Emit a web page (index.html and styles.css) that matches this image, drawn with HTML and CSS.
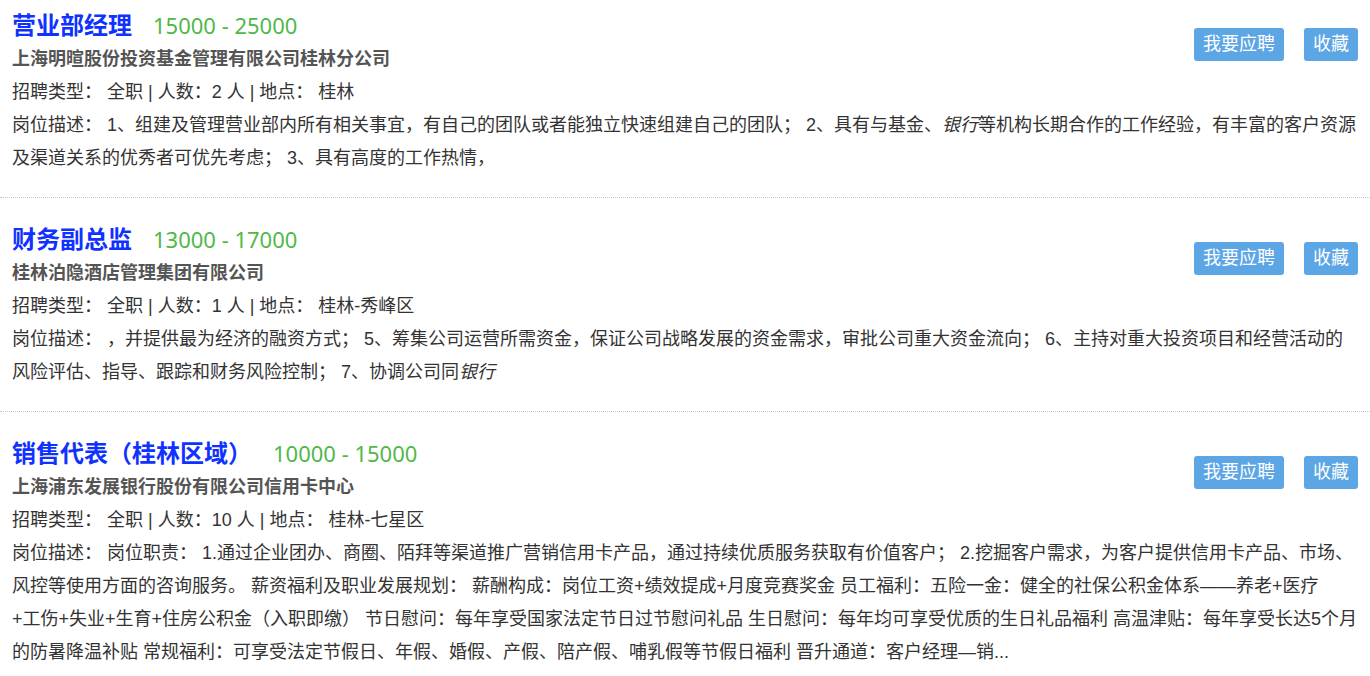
FILE: index.html
```html
<!DOCTYPE html>
<html lang="zh-CN">
<head>
    <meta charset="UTF-8">
    <title>职位列表</title>
    <link rel="stylesheet" href="styles.css">
</head>
<body>
    <div class="job-list">
        <div class="job">
            <div class="job-top">
                <div class="job-info">
                    <h3 class="job-title"><a href="#">营业部经理</a><span class="salary">15000 - 25000</span></h3>
                    <div class="company">上海明暄股份投资基金管理有限公司桂林分公司</div>
                    <div class="meta">招聘类型： 全职 | 人数：2 人 | 地点： 桂林</div>
                </div>
                <div class="actions">
                    <a class="btn" href="#">我要应聘</a>
                    <a class="btn" href="#">收藏</a>
                </div>
            </div>
            <p class="desc">岗位描述： 1、组建及管理营业部内所有相关事宜，有自己的团队或者能独立快速组建自己的团队； 2、具有与基金、<em>银行</em>等机构长期合作的工作经验，有丰富的客户资源及渠道关系的优秀者可优先考虑； 3、具有高度的工作热情，</p>
        </div>

        <div class="job">
            <div class="job-top">
                <div class="job-info">
                    <h3 class="job-title"><a href="#">财务副总监</a><span class="salary">13000 - 17000</span></h3>
                    <div class="company">桂林泊隐酒店管理集团有限公司</div>
                    <div class="meta">招聘类型： 全职 | 人数：1 人 | 地点： 桂林-秀峰区</div>
                </div>
                <div class="actions">
                    <a class="btn" href="#">我要应聘</a>
                    <a class="btn" href="#">收藏</a>
                </div>
            </div>
            <p class="desc">岗位描述： ，并提供最为经济的融资方式； 5、筹集公司运营所需资金，保证公司战略发展的资金需求，审批公司重大资金流向； 6、主持对重大投资项目和经营活动的风险评估、指导、跟踪和财务风险控制； 7、协调公司同<em>银行</em></p>
        </div>

        <div class="job">
            <div class="job-top">
                <div class="job-info">
                    <h3 class="job-title"><a href="#">销售代表（桂林区域）</a><span class="salary">10000 - 15000</span></h3>
                    <div class="company">上海浦东发展银行股份有限公司信用卡中心</div>
                    <div class="meta">招聘类型： 全职 | 人数：10 人 | 地点： 桂林-七星区</div>
                </div>
                <div class="actions">
                    <a class="btn" href="#">我要应聘</a>
                    <a class="btn" href="#">收藏</a>
                </div>
            </div>
            <p class="desc">岗位描述： 岗位职责： 1.通过企业团办、商圈、陌拜等渠道推广营销信用卡产品，通过持续优质服务获取有价值客户； 2.挖掘客户需求，为客户提供信用卡产品、市场、风控等使用方面的咨询服务。 薪资福利及职业发展规划： 薪酬构成：岗位工资+绩效提成+月度竞赛奖金 员工福利：五险一金：健全的社保公积金体系——养老+医疗+&#8288;工&#8288;伤+失业+生育+住房公积金（入职即缴） 节日慰问：每年享受国家法定节日过节慰问礼品 生日慰问：每年均可享受优质的生日礼品福利 高温津贴：每年享受长达5个月的防暑降温补贴 常规福利：可享受法定节假日、年假、婚假、产假、陪产假、哺乳假等节假日福利 晋升通道：客户经理—销...</p>
        </div>
    </div>
</body>
</html>
```

FILE: styles.css
```css
body {
    margin: 0;
    background-color: #fff;
    color: #333;
    font-family: "Liberation Sans", "Noto Sans CJK SC", sans-serif;
    font-size: 18px;
}
.job {
    padding: 23px 11px 22px 12px;
    border-bottom: 1px dotted #c8c8c8;
}
.job:first-child {
    padding-top: 7px;
}
.job-top {
    display: flex;
    justify-content: space-between;
    align-items: flex-start;
}
.job-title {
    margin: 0;
    line-height: 36px;
    font-family: "Noto Sans", "Noto Sans CJK SC", sans-serif;
    font-size: 24px;
    font-weight: bold;
}
.job-title a {
    color: #0f32ff;
    text-decoration: none;
}
.salary {
    margin-left: 21px;
    font-size: 22px;
    font-weight: normal;
    color: #4fb848;
}
.company {
    line-height: 33px;
    font-weight: bold;
    color: #555;
}
.meta {
    line-height: 33px;
}
.actions {
    display: flex;
    gap: 20px;
    margin-right: 1px;
    padding-top: 21px;
}
.btn {
    display: block;
    padding: 0 9px;
    line-height: 33px;
    color: #fff;
    background-color: #5ca6e5;
    border-radius: 3px;
    text-decoration: none;
}
.desc {
    margin: 0;
    line-height: 33px;
}
```
